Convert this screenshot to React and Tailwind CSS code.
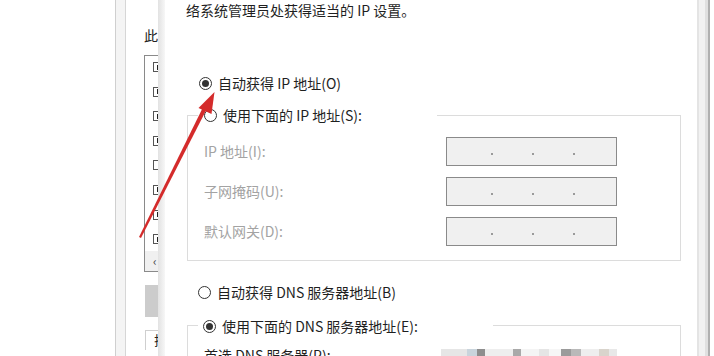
import React from 'react';

const font = { fontFamily: '"Noto Sans CJK SC", "Noto Sans", sans-serif' };

function Radio({ checked }) {
  return (
    <span className="w-[13px] h-[13px] rounded-full border border-[#333] bg-white flex items-center justify-center shrink-0">
      {checked && <span className="w-[7px] h-[7px] rounded-full bg-[#333]" />}
    </span>
  );
}

function IpBox() {
  return (
    <div className="w-[171px] h-[29px] border border-[#8a8a8a] bg-[#f0f0f0] flex items-end pb-[10px] pl-[44px] gap-[39px]">
      <span className="w-[2px] h-[2px] bg-[#9a9a9a]" />
      <span className="w-[2px] h-[2px] bg-[#9a9a9a]" />
      <span className="w-[2px] h-[2px] bg-[#9a9a9a]" />
    </div>
  );
}

const checks = [true, true, true, true, false, true, true, true];

function BackWindow() {
  return (
    <div className="w-[32px] h-full bg-white overflow-hidden flex flex-col">
      <div className="h-[28px] shrink-0" />
      <div className="pl-[18px] text-[14px] leading-[14px] text-[#222] whitespace-nowrap shrink-0">此</div>
      <div className="h-[13px] shrink-0" />
      <div className="ml-[18px] h-[217px] shrink-0 border-l border-t border-b border-[#8a8a8a] flex flex-col">
        <div className="flex flex-col pt-[6px] gap-[14.6px] pl-[8px]">
          {checks.map((c, i) => (
            <span key={i} className="w-[10px] h-[10px] border border-[#555] flex items-center pl-[3px]">
              {c && <span className="w-[3px] h-[5px] bg-[#222]" />}
            </span>
          ))}
        </div>
        <div className="mt-auto h-[20px] bg-[#f0f0f0] flex items-center pl-[8px] text-[12px] text-[#444] leading-none">‹</div>
      </div>
      <div className="h-[13px] shrink-0" />
      <div className="ml-[19px] h-[32px] shrink-0 bg-[#cccccc]" />
      <div className="h-[13px] shrink-0" />
      <div className="ml-[19px] h-[20px] shrink-0 border-l border-t border-[#cfcfcf] pl-[8px] text-[13px] leading-[18px] text-[#222]">拉</div>
    </div>
  );
}

export default function App() {
  const rows = [
    ['IP 地址(I):', 'mt-[21px]'],
    ['子网掩码(U):', 'mt-[11px]'],
    ['默认网关(D):', 'mt-[11px]'],
  ];
  return (
    <div className="w-[714px] h-[356px] relative overflow-hidden bg-white flex" style={font}>
      <div className="w-[115px] bg-white" />
      <div className="w-[1px] bg-[#cfcfcf]" />
      <div className="w-[9px] bg-[#f4f4f4]" />
      <div className="w-[1px] bg-[#d6d6d6]" />
      <BackWindow />
      <div className="w-[7px] bg-gradient-to-r from-[#e2e2e2] to-[#f7f7f7]" />

      <div className="w-[532px] h-full overflow-hidden bg-white flex flex-col text-[#1f1f1f] text-[14px]">
        <div className="h-[20px] shrink-0 pl-[21px] leading-[20px] whitespace-nowrap">络系统管理员处获得适当的 IP 设置。</div>

        <div className="mt-[53px] h-[20px] shrink-0 flex items-center pl-[34px] gap-[6px] whitespace-nowrap">
          <Radio checked />
          <span>自动获得 IP 地址(O)</span>
        </div>

        <div className="mt-[22px] ml-[22px] w-[494px] h-[146px] shrink-0 border border-[#dcdcdc] relative flex flex-col">
          <div className="absolute -top-[11px] left-[10px] w-[239px] h-[20px] bg-white flex items-center pl-[6px] gap-[6px] whitespace-nowrap">
            <Radio />
            <span>使用下面的 IP 地址(S):</span>
          </div>
          {rows.map(([label, mt]) => (
            <div key={label} className={`${mt} flex items-center`}>
              <span className="w-[258px] pl-[16px] text-[#a3a3a3]">{label}</span>
              <IpBox />
            </div>
          ))}
        </div>

        <div className="mt-[21px] h-[20px] shrink-0 flex items-center pl-[33px] gap-[6px] whitespace-nowrap">
          <Radio />
          <span>自动获得 DNS 服务器地址(B)</span>
        </div>

        <div className="mt-[23px] ml-[22px] w-[494px] h-[60px] shrink-0 border-t border-l border-r border-[#dcdcdc] relative">
          <div className="absolute -top-[10px] left-[10px] w-[295px] h-[20px] bg-white flex items-center pl-[5px] gap-[6px] whitespace-nowrap">
            <Radio checked />
            <span>使用下面的 DNS 服务器地址(E):</span>
          </div>
          <div className="mt-[19px] pl-[16px] flex items-center">
            <span className="w-[237px] whitespace-nowrap">首选 DNS 服务器(P):</span>
            <div className="flex h-[14px]">
              <span className="w-[26px] bg-[#e6e6e6]" />
              <span className="w-[10px] bg-[#c9d4dc]" />
              <span className="w-[8px] bg-[#8e8e8e]" />
              <span className="w-[28px] bg-[#eeeeee]" />
              <span className="w-[8px] bg-[#a9a9a9]" />
              <span className="w-[18px] bg-[#f4f4f4]" />
              <span className="w-[10px] bg-[#e5e5e5]" />
              <span className="w-[12px] bg-[#f6f6f6]" />
              <span className="w-[10px] bg-[#9b9b9b]" />
              <span className="w-[10px] bg-[#b9b9b9]" />
              <span className="w-[18px] bg-[#eeeeee]" />
              <span className="w-[10px] bg-[#d9d4cc]" />
              <span className="w-[8px] bg-[#e8e8e8]" />
            </div>
          </div>
        </div>
      </div>

      <div className="w-[11px] bg-[#eeeeee] flex">
        <div className="w-[2px] bg-[#e4e4e4]" />
        <div className="w-[6px] bg-[#f2f2f2]" />
        <div className="w-[3px] bg-[#e0e0e0]" />
      </div>
      <div className="w-[2px] bg-[#b0b0b0]" />
      <div className="w-[4px] bg-white" />

      <svg className="absolute inset-0 pointer-events-none" width="714" height="356" viewBox="0 0 714 356">
        <polygon points="139,237 141,238 206.5,109.6 202.5,108.2" fill="#d42b2b" />
        <polygon points="214.5,92 198.5,108 211.5,114" fill="#d42b2b" />
      </svg>
    </div>
  );
}
